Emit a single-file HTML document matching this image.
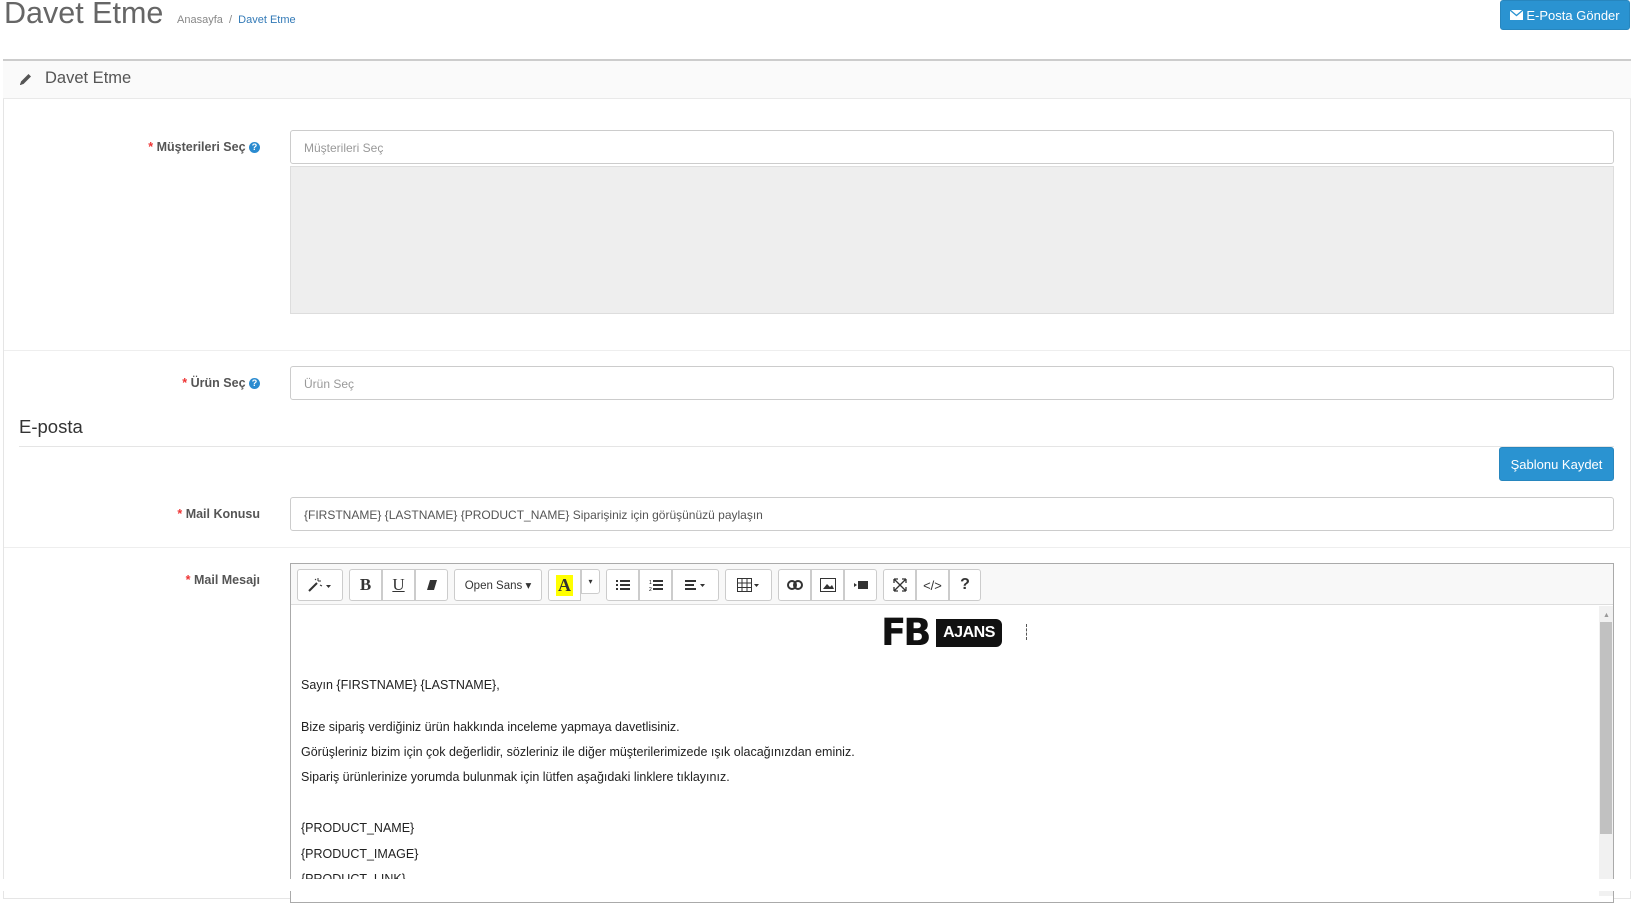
<!DOCTYPE html>
<html><head><meta charset="utf-8"><style>
*{box-sizing:border-box;margin:0;padding:0}
body{width:1634px;height:890px;overflow:hidden;background:#fff;font-family:"Liberation Sans",sans-serif;color:#333;position:relative}
.a{position:absolute}
.title{left:4px;top:-4px;font-size:30.5px;color:#666;font-weight:300}
.bc{left:177px;top:14px;font-size:11px;color:#888}
.bc span{color:#337ab7}
.btn{background:#2a93d1;color:#fff;border:1px solid #2786be;border-radius:3px;font-size:13px;display:flex;align-items:center;justify-content:center}
.panel{left:3px;top:59px;width:1628px;height:840px;border:1px solid #e5e5e5;border-top:2px solid #ccc}
.ph{left:3px;top:59px;width:1628px;height:40px;background:#fafafa;border-top:2px solid #ccc;border-bottom:1px solid #e9e9e9}
.lbl{font-size:12.5px;font-weight:bold;color:#555;text-align:right;width:260px;left:0}
.lbl b{color:#e33;font-weight:bold}
.q{display:inline-block;width:11px;height:11px;border-radius:50%;background:#2a8bd0;color:#fff;font-size:9px;line-height:11px;text-align:center;vertical-align:1px}
.inp{left:290px;width:1324px;height:34px;border:1px solid #ccc;border-radius:3px;font-size:12px;color:#999;padding:10px 13px;background:#fff}
.sep{left:4px;width:1626px;height:1px;background:#eee}
.tb{top:569px;height:32px;border:1px solid #ccc;border-radius:3px;background:#fff;display:flex;align-items:center;justify-content:center;font-size:14px;color:#333}
.txt{left:301px;font-size:12.5px;color:#222}
</style></head><body>
<div class="a title">Davet Etme</div>
<div class="a bc">Anasayfa &nbsp;/&nbsp; <span>Davet Etme</span></div>
<div class="a btn" style="left:1500px;top:0;width:130px;height:30px"><svg width="13" height="10" viewBox="0 0 13 10" style="margin-right:3px"><rect width="13" height="10" fill="#fff"/><path d="M0 0L6.5 5.5L13 0" stroke="#2a93d1" stroke-width="1.3" fill="none"/></svg>E-Posta Gönder</div>
<div class="a panel"></div>
<div class="a ph"></div>
<svg class="a" style="left:18px;top:72px" width="15" height="15" viewBox="0 0 15 15"><path d="M2 13L3 9.5L10.5 2L13 4.5L5.5 12Z" fill="#555"/><path d="M2 13L3.5 12.7L2.3 11.5Z" fill="#555"/></svg>
<div class="a" style="left:45px;top:69px;font-size:16.5px;color:#555">Davet Etme</div>

<div class="a lbl" style="top:140px"><b>*</b> Müşterileri Seç <span class="q">?</span></div>
<div class="a inp" style="top:130px">Müşterileri Seç</div>
<div class="a" style="left:290px;top:166px;width:1324px;height:148px;background:#eee;border:1px solid #ddd"></div>
<div class="a sep" style="top:350px"></div>

<div class="a lbl" style="top:376px"><b>*</b> Ürün Seç <span class="q">?</span></div>
<div class="a inp" style="top:366px">Ürün Seç</div>

<div class="a" style="left:19px;top:416px;font-size:18.5px;color:#333">E-posta</div>
<div class="a" style="left:19px;top:446px;width:1595px;height:1px;background:#e5e5e5"></div>
<div class="a btn" style="left:1499px;top:447px;width:115px;height:34px">Şablonu Kaydet</div>

<div class="a lbl" style="top:507px"><b>*</b> Mail Konusu</div>
<div class="a inp" style="top:497px;color:#555">{FIRSTNAME} {LASTNAME} {PRODUCT_NAME} Siparişiniz için görüşünüzü paylaşın</div>
<div class="a sep" style="top:547px"></div>

<div class="a lbl" style="top:573px"><b>*</b> Mail Mesajı</div>
<div class="a" style="left:290px;top:563px;width:1324px;height:340px;border:1px solid #aaa;background:#fff"></div>
<div class="a" style="left:291px;top:564px;width:1322px;height:41px;background:#f8f8f8;border-bottom:1px solid #ddd"></div>

<div class="a tb" style="left:297px;width:46px">
<svg width="26" height="16" viewBox="0 0 26 16"><path d="M2 14L10 6" stroke="#333" stroke-width="2"/><path d="M11 1v3M14 4h-3M13 8l2 1M8 2l1 1" stroke="#333" stroke-width="1"/><path d="M19 8l2.5 3 2.5-3z" fill="#333"/></svg></div>
<div class="a tb" style="left:349px;width:33px;font-family:'Liberation Serif',serif;font-weight:bold;font-size:17px;border-radius:3px 0 0 3px">B</div>
<div class="a tb" style="left:382px;width:33px;font-family:'Liberation Serif',serif;font-size:17px;text-decoration:underline;border-radius:0">U</div>
<div class="a tb" style="left:415px;width:33px;border-radius:0 3px 3px 0"><svg width="12" height="12" viewBox="0 0 12 12"><path d="M4 1h7L8 11H1z" fill="#333"/></svg></div>
<div class="a tb" style="left:454px;width:88px;font-size:11.5px">Open Sans ▾</div>
<div class="a tb" style="left:548px;width:33px;border-radius:3px 0 0 3px"><span style="background:#ff0;font-family:'Liberation Serif',serif;font-weight:bold;font-size:18px;padding:0 2px">A</span></div>
<div class="a tb" style="left:581px;width:19px;height:25px;font-size:8px;border-radius:0 3px 3px 0">▾</div>
<div class="a tb" style="left:606px;width:33px;border-radius:3px 0 0 3px"><svg width="14" height="12"><path d="M0 2h2M0 6h2M0 10h2M4 2h10M4 6h10M4 10h10" stroke="#333" stroke-width="2"/></svg></div>
<div class="a tb" style="left:639px;width:33px;border-radius:0"><svg width="14" height="12"><text x="0" y="5" font-size="5" font-family="Liberation Sans">1</text><text x="0" y="12" font-size="5" font-family="Liberation Sans">2</text><path d="M4 2h10M4 6h10M4 10h10" stroke="#333" stroke-width="2"/></svg></div>
<div class="a tb" style="left:672px;width:47px;border-radius:0 3px 3px 0"><svg width="22" height="12"><path d="M0 2h11M0 6h9M0 10h11" stroke="#333" stroke-width="2"/><path d="M15 5l2.5 3 2.5-3z" fill="#333"/></svg></div>
<div class="a tb" style="left:725px;width:47px"><svg width="24" height="14"><path d="M.5.5h14v13h-14zM.5 5h14M.5 9.5h14M5 .5v13M10 .5v13" stroke="#333" fill="none"/><path d="M17 6l2.5 3 2.5-3z" fill="#333"/></svg></div>
<div class="a tb" style="left:778px;width:33px;border-radius:3px 0 0 3px"><svg width="16" height="10"><rect x="1" y="1" width="8" height="8" rx="4" stroke="#333" stroke-width="2" fill="none"/><rect x="7" y="1" width="8" height="8" rx="4" stroke="#333" stroke-width="2" fill="none"/></svg></div>
<div class="a tb" style="left:811px;width:33px;border-radius:0"><svg width="16" height="14"><rect x=".5" y=".5" width="15" height="13" stroke="#333" fill="none"/><path d="M3 11l4-5 3 3 2-2 2 4z" fill="#333"/></svg></div>
<div class="a tb" style="left:844px;width:33px;border-radius:0 3px 3px 0"><svg width="16" height="10"><rect x="5" y="1" width="10" height="8" fill="#333"/><path d="M1 3l3 2-3 2z" fill="#333"/></svg></div>
<div class="a tb" style="left:883px;width:33px;border-radius:3px 0 0 3px"><svg width="14" height="14"><path d="M1 1l12 12M13 1L1 13M1 1h4M1 1v4M13 1h-4M13 1v4M1 13h4M1 13v-4M13 13h-4M13 13v-4" stroke="#333" stroke-width="1.3" fill="none"/></svg></div>
<div class="a tb" style="left:916px;width:33px;border-radius:0;font-size:13px">&lt;/&gt;</div>
<div class="a tb" style="left:949px;width:32px;border-radius:0 3px 3px 0;font-weight:bold;font-size:16px">?</div>

<div class="a" style="left:881px;top:615px;width:121px;height:35px;">
<div class="a" style="left:0;top:0;font-family:'DejaVu Sans',sans-serif;font-weight:bold;font-size:37px;line-height:35px;color:#111;letter-spacing:-3px">FB</div>
<div class="a" style="left:55px;top:4px;width:66px;height:28px;background:#111;border-radius:0 6px 6px 0;color:#fff;font-weight:bold;font-size:16px;line-height:28px;text-align:center;letter-spacing:-0.5px">AJANS</div>
</div>
<div class="a" style="left:1026px;top:624px;width:1px;height:16px;border-left:1px dashed #555"></div>

<div class="a txt" style="top:678px">Sayın {FIRSTNAME} {LASTNAME},</div>
<div class="a txt" style="top:720px">Bize sipariş verdiğiniz ürün hakkında inceleme yapmaya davetlisiniz.</div>
<div class="a txt" style="top:745px">Görüşleriniz bizim için çok değerlidir, sözleriniz ile diğer müşterilerimizede ışık olacağınızdan eminiz.</div>
<div class="a txt" style="top:770px">Sipariş ürünlerinize yorumda bulunmak için lütfen aşağıdaki linklere tıklayınız.</div>
<div class="a txt" style="top:821px">{PRODUCT_NAME}</div>
<div class="a txt" style="top:847px">{PRODUCT_IMAGE}</div>
<div class="a txt" style="top:872px">{PRODUCT_LINK}</div>

<div class="a" style="left:1599px;top:606px;width:14px;height:290px;background:#f1f1f1"></div>
<div class="a" style="left:1603px;top:612px;font-size:7px;color:#999">▲</div>
<div class="a" style="left:1600px;top:622px;width:12px;height:212px;background:#c1c1c1"></div>
<div class="a" style="left:0;top:879px;width:1634px;height:12px;background:#fff"></div>
</body></html>
